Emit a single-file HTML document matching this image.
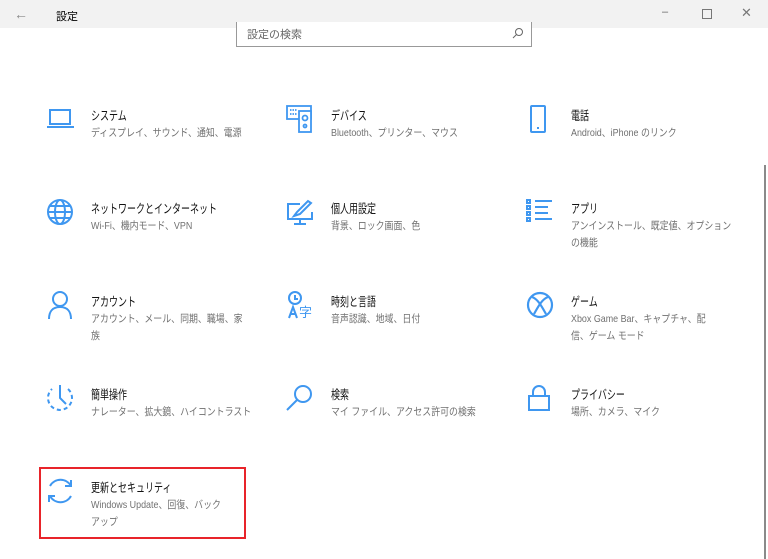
<!DOCTYPE html>
<html><head><meta charset="utf-8"><style>
body{margin:0;width:768px;height:559px;overflow:hidden;background:#fff;font-family:"Liberation Sans","Noto Sans CJK JP",sans-serif;position:relative}
.tb{position:absolute;left:0;top:0;width:768px;height:28px;background:#f2f2f2}
.t{position:absolute;font-size:11px;color:#000}
.search{position:absolute;left:236px;top:22px;width:296px;height:25px;border:1px solid #999;border-top:none;background:#fff;box-sizing:border-box}
.item{position:absolute;width:200px}
.item svg{position:absolute;left:0;top:-4px}
.ti{position:absolute;left:45px;top:-3px;font-size:12.5px;color:#111;white-space:nowrap;transform:scaleX(0.72);transform-origin:0 0}
.de{position:absolute;left:45px;top:17px;font-size:10.5px;color:#707070;line-height:17px;white-space:nowrap;transform:scaleX(0.85);transform-origin:0 0}
.sb{position:absolute;left:764px;top:165px;width:2px;height:394px;background:#8a8a8a}
</style></head><body>
<div class="tb"></div>
<div class="t" style="left:14px;top:6px;color:#888;font-size:14px">&#8592;</div>
<div class="t" style="left:56px;top:8px;font-size:11px">設定</div>
<div class="t" style="left:662px;top:6px;color:#666">&#8211;</div>
<div style="position:absolute;left:702px;top:9px;width:8px;height:8px;border:1px solid #777"></div>
<div class="t" style="left:741px;top:5px;color:#777;font-size:13px">✕</div>
<div class="search"><span style="position:absolute;left:10px;top:4px;font-size:11px;color:#666">設定の検索</span>
<svg style="position:absolute;right:7px;top:5px" width="12" height="12" viewBox="0 0 12 12" fill="none" stroke="#666" stroke-width="1"><circle cx="7" cy="5" r="3.5"/><path d="M4.5 7.5L1 11"/></svg></div>
<div class="sb"></div>

<div class="item" style="left:46px;top:108px"><svg width="30" height="30" viewBox="0 0 30 30" fill="none" stroke="#3f97f0" stroke-width="2"><rect x="4" y="6" width="20" height="14"/><path d="M1 23h27"/></svg><div class="ti">システム</div><div class="de">ディスプレイ、サウンド、通知、電源</div></div>
<div class="item" style="left:286px;top:108px"><svg width="30" height="30" viewBox="0 0 30 30" fill="none" stroke="#3f97f0" stroke-width="1.8"><rect x="1" y="2" width="24" height="13"/><rect x="13" y="7" width="12" height="21" fill="#fff"/><circle cx="19" cy="14" r="2.5"/><circle cx="19" cy="22" r="1.5"/><path d="M4 6h7M4 10h7" stroke-dasharray="1.5 1"/></svg><div class="ti">デバイス</div><div class="de">Bluetooth、プリンター、マウス</div></div>
<div class="item" style="left:526px;top:108px"><svg width="30" height="30" viewBox="0 0 30 30" fill="none" stroke="#3f97f0" stroke-width="2"><rect x="5" y="2" width="14" height="26" rx="1"/><path d="M11 24h2"/></svg><div class="ti">電話</div><div class="de">Android、iPhone のリンク</div></div>

<div class="item" style="left:46px;top:201px"><svg width="30" height="30" viewBox="0 0 30 30" fill="none" stroke="#3f97f0" stroke-width="2"><circle cx="14" cy="15" r="12"/><ellipse cx="14" cy="15" rx="5" ry="12"/><path d="M2 15h24M4 9h20M4 21h20"/></svg><div class="ti">ネットワークとインターネット</div><div class="de">Wi-Fi、機内モード、VPN</div></div>
<div class="item" style="left:286px;top:201px"><svg width="30" height="30" viewBox="0 0 30 30" fill="none" stroke="#3f97f0" stroke-width="2"><path d="M14 7H2v15h24V15"/><path d="M14 22v5M8 27h12"/><path d="M8 19l3-4 11-11 3 2-11 11z"/></svg><div class="ti">個人用設定</div><div class="de">背景、ロック画面、色</div></div>
<div class="item" style="left:526px;top:201px"><svg width="30" height="30" viewBox="0 0 30 30" fill="none" stroke="#3f97f0" stroke-width="2"><rect x="1" y="3" width="3" height="3"/><rect x="1" y="9" width="3" height="3"/><rect x="1" y="15" width="3" height="3"/><rect x="1" y="21" width="3" height="3"/><path d="M9 4h17M9 10h13M9 16h13M9 22h17"/></svg><div class="ti">アプリ</div><div class="de">アンインストール、既定値、オプション<br>の機能</div></div>

<div class="item" style="left:46px;top:294px"><svg width="30" height="30" viewBox="0 0 30 30" fill="none" stroke="#3f97f0" stroke-width="2"><circle cx="14" cy="9" r="7"/><path d="M3 29c0-8 4-12 11-12s11 4 11 12"/></svg><div class="ti">アカウント</div><div class="de">アカウント、メール、同期、職場、家<br>族</div></div>
<div class="item" style="left:286px;top:294px"><svg width="30" height="30" viewBox="0 0 30 30" fill="none" stroke="#3f97f0" stroke-width="2"><circle cx="9" cy="8" r="6"/><path d="M9 5v4h3"/><path d="M3 28l4-11 4 11M4.5 24h5"/><text x="13" y="27" font-size="13" fill="#3f97f0" stroke="none" font-family="Noto Sans CJK JP">字</text></svg><div class="ti">時刻と言語</div><div class="de">音声認識、地域、日付</div></div>
<div class="item" style="left:526px;top:294px"><svg width="30" height="30" viewBox="0 0 30 30" fill="none" stroke="#3f97f0" stroke-width="2.2"><circle cx="14" cy="15" r="12"/><path d="M6 7c6 2 10 10 14 17M22 7c-6 2-10 10-14 17"/></svg><div class="ti">ゲーム</div><div class="de">Xbox Game Bar、キャプチャ、配<br>信、ゲーム モード</div></div>

<div class="item" style="left:46px;top:387px"><svg width="30" height="30" viewBox="0 0 30 30" fill="none" stroke="#3f97f0" stroke-width="2"><path d="M14 2v13l6 6"/><path d="M22 6a12 12 0 1 1-16 0" stroke-dasharray="4 3"/></svg><div class="ti">簡単操作</div><div class="de">ナレーター、拡大鏡、ハイコントラスト</div></div>
<div class="item" style="left:286px;top:387px"><svg width="30" height="30" viewBox="0 0 30 30" fill="none" stroke="#3f97f0" stroke-width="2"><circle cx="17" cy="11" r="8"/><path d="M11 17L1 27"/></svg><div class="ti">検索</div><div class="de">マイ ファイル、アクセス許可の検索</div></div>
<div class="item" style="left:526px;top:387px"><svg width="30" height="30" viewBox="0 0 30 30" fill="none" stroke="#3f97f0" stroke-width="2"><path d="M7 13V9a6 6 0 0 1 12 0v4"/><rect x="3" y="13" width="20" height="14"/></svg><div class="ti">プライバシー</div><div class="de">場所、カメラ、マイク</div></div>

<div style="position:absolute;left:39px;top:467px;width:207px;height:72px;border:2px solid #e8242a;box-sizing:border-box"></div>
<div class="item" style="left:46px;top:480px"><svg width="30" height="30" viewBox="0 0 30 30" fill="none" stroke="#3f97f0" stroke-width="2"><path d="M4 10a12 12 0 0 1 21 0M25 4v6h-6"/><path d="M25 20a12 12 0 0 1-21 0M3 26v-6h6"/></svg><div class="ti">更新とセキュリティ</div><div class="de">Windows Update、回復、バック<br>アップ</div></div>
</body></html>
